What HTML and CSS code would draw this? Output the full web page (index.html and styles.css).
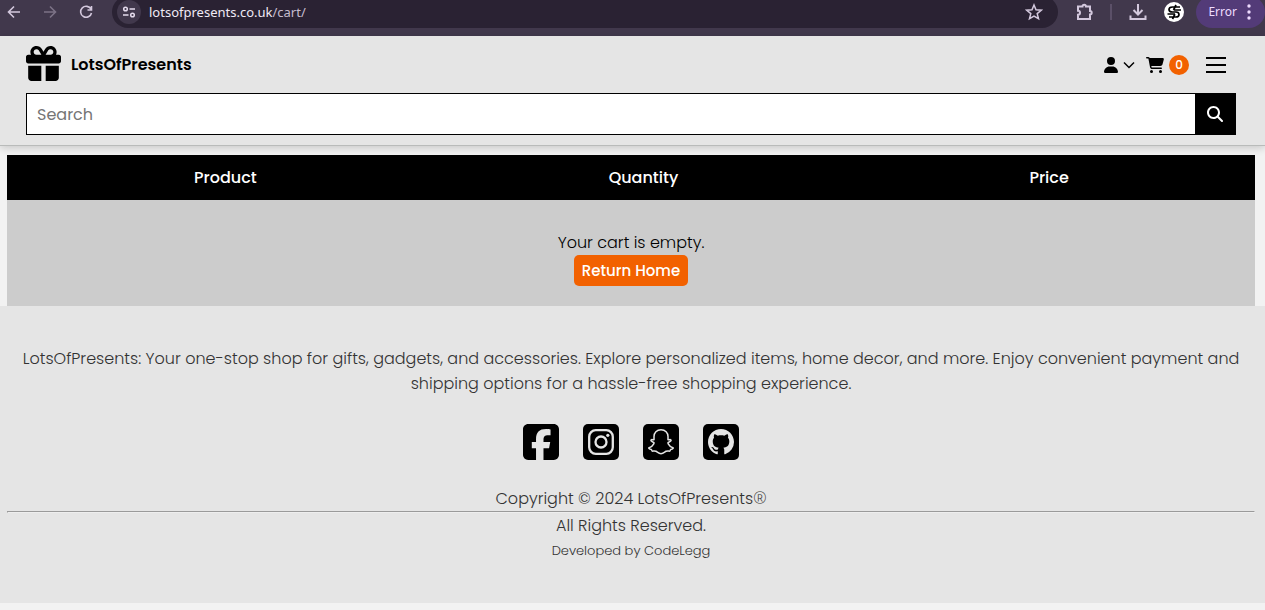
FILE: index.html
```html
<!DOCTYPE html>
<html lang="en">
<head>
<meta charset="utf-8">
<meta name="viewport" content="width=device-width, initial-scale=1">
<title>LotsOfPresents - Cart</title>
<link rel="stylesheet" href="styles.css">
</head>
<body>
<div class="browser">
  <div class="browser-row">
    <div class="browser-nav">
      <button class="tool" aria-label="Back"><svg width="16" height="16" viewBox="0 0 16 16"><path d="M14 8H3M8 2.500L2.500 8L8 13.500"/></svg></button>
      <button class="tool tool-off" aria-label="Forward"><svg width="16" height="16" viewBox="0 0 16 16"><path d="M2 8h11M8 2.500L13.500 8L8 13.500"/></svg></button>
      <button class="tool" aria-label="Reload"><svg width="16" height="16" viewBox="0 0 16 16"><path d="M13 5.200A5.500 5.500 0 1 0 13.500 9M13.500 2v4h-4"/></svg></button>
    </div>
    <div class="address">
      <button class="site-info" aria-label="Site information"><svg width="14" height="14" viewBox="0 0 14 14"><circle cx="3.500" cy="4" r="1.800"/><path d="M7.500 4h5.500M1 10h5.500"/><circle cx="10.500" cy="10" r="1.800"/></svg></button>
      <div class="url">lotsofpresents.co.uk<span class="url-path">/cart/</span></div>
      <button class="tool" aria-label="Bookmark"><svg width="18" height="18" viewBox="0 0 18 18"><path d="M9 2l2 4.800 5.200.4-4 3.400 1.300 5.100L9 13l-4.500 2.700 1.300-5.100-4-3.400L7 6.800z"/></svg></button>
    </div>
    <div class="browser-tools">
      <button class="tool" aria-label="Extensions"><svg width="18" height="18" viewBox="0 0 18 18"><path d="M2 3.500h4.500a1.700 1.700 0 0 1 3.400 0H14V8a1.700 1.700 0 0 1 0 3.400V16H2v-4.200a2 2 0 0 0 0-4z"/></svg></button>
      <span class="divider"></span>
      <button class="tool" aria-label="Downloads"><svg width="18" height="18" viewBox="0 0 18 18"><path d="M9 1v10M4.500 7L9 11.500L13.500 7M1.500 12.500V16h15v-3.500"/></svg></button>
      <button class="profile" aria-label="Profile"><svg width="20" height="20" viewBox="0 0 20 20"><circle cx="10" cy="10" r="10" fill="#fff"/><path d="M16 5H8.500Q5 5 5 7.500T8.500 10h3.500Q15 10 15 12.500T12 15H5M17 8H9.500M3.500 12H11M12 3L9.500 8M11 12l-2.500 5" fill="none" stroke="#000" stroke-width="1.700"/></svg></button>
      <button class="error">Error<svg width="4" height="16" viewBox="0 0 4 16"><circle cx="2" cy="2" r="1.700"/><circle cx="2" cy="8" r="1.700"/><circle cx="2" cy="14" r="1.700"/></svg></button>
    </div>
  </div>
</div>

<header class="site-header">
  <div class="brand-row">
    <a class="brand" href="#">
      <svg width="35" height="35" viewBox="0 0 512 512"><path d="M190.500 68.800L225.300 128H224 152c-22.100 0-40-17.900-40-40s17.900-40 40-40h2.200c14.900 0 28.800 7.900 36.300 20.800zM64 88c0 14.400 3.500 28 9.600 40H32c-17.700 0-32 14.300-32 32v64c0 17.700 14.300 32 32 32H480c17.700 0 32-14.300 32-32V160c0-17.700-14.300-32-32-32H438.400c6.100-12 9.600-25.600 9.600-40c0-48.600-39.400-88-88-88h-2.200c-31.900 0-61.500 16.900-77.700 44.400L256 85.500l-24.100-41C215.700 16.900 186.100 0 154.200 0H152C103.400 0 64 39.400 64 88zm336 0c0 22.100-17.900 40-40 40H288h-1.300l34.800-59.200C329.100 55.900 342.900 48 357.800 48H360c22.100 0 40 17.900 40 40zM32 288V464c0 26.500 21.500 48 48 48H224V288H32zM288 512H432c26.500 0 48-21.500 48-48V288H288V512z"/></svg>
      <span class="brand-name">LotsOfPresents</span>
    </a>
    <nav class="actions">
      <button class="account" aria-label="Account">
        <svg width="14" height="16" viewBox="0 0 448 512"><path d="M224 256A128 128 0 1 0 224 0a128 128 0 1 0 0 256zm-45.700 48C79.800 304 0 383.800 0 482.300C0 498.700 13.300 512 29.700 512H418.300c16.400 0 29.700-13.300 29.700-29.700C448 383.800 368.200 304 269.700 304H178.300z"/></svg>
        <svg class="line" width="12" height="8" viewBox="0 0 12 8"><path d="M1 1.500l5 5 5-5"/></svg>
      </button>
      <a class="cart" href="#" aria-label="Cart">
        <svg width="18" height="16" viewBox="0 0 576 512"><path d="M0 24C0 10.700 10.700 0 24 0H69.500c22 0 41.500 12.800 50.600 32h411c26.300 0 45.500 25 38.600 50.400l-41 152.300c-8.500 31.400-37 53.300-69.500 53.300H170.700l5.400 28.500c2.200 11.300 12.100 19.500 23.600 19.500H488c13.300 0 24 10.700 24 24s-10.700 24-24 24H199.700c-34.600 0-64.300-24.600-70.700-58.500L77.400 54.500c-.7-3.800-4-6.500-7.900-6.500H24C10.700 48 0 37.300 0 24zM128 464a48 48 0 1 1 96 0 48 48 0 1 1 -96 0zm336-48a48 48 0 1 1 0 96 48 48 0 1 1 0-96z"/></svg>
        <span class="count">0</span>
      </a>
      <button class="menu" aria-label="Menu"><span></span><span></span><span></span></button>
    </nav>
  </div>
  <form class="search" role="search">
    <input class="search-input" type="text" placeholder="Search" aria-label="Search">
    <button class="search-button" type="button" aria-label="Submit search"><svg width="16" height="16" viewBox="0 0 512 512"><path d="M416 208c0 45.900-14.900 88.300-40 122.700L502.600 457.400c12.500 12.500 12.500 32.800 0 45.300s-32.800 12.500-45.300 0L330.700 376c-34.400 25.200-76.800 40-122.700 40C93.100 416 0 322.900 0 208S93.100 0 208 0S416 93.100 416 208zM208 352a144 144 0 1 0 0-288 144 144 0 1 0 0 288z"/></svg></button>
  </form>
</header>

<main class="cart-main">
  <table class="cart-table">
    <thead><tr><th class="col-product">Product</th><th class="col-quantity">Quantity</th><th>Price</th></tr></thead>
    <tbody><tr><td colspan="3"><p class="empty-text">Your cart is empty.</p><a class="home-link" href="#">Return Home</a></td></tr></tbody>
  </table>
</main>

<footer class="site-footer">
  <p class="about">LotsOfPresents: Your one-stop shop for gifts, gadgets, and accessories. Explore personalized items, home decor, and more. Enjoy convenient payment and shipping options for a hassle-free shopping experience.</p>
  <div class="social">
    <a href="#" aria-label="Facebook"><svg width="36" height="36" viewBox="0 32 448 448"><path d="M64 32C28.700 32 0 60.700 0 96V416c0 35.300 28.700 64 64 64h98.200V334.200H109.400V256h52.800V222.300c0-87.100 39.400-127.500 125-127.500c16.200 0 44.200 3.200 55.700 6.400V172c-6-.6-16.500-1-29.600-1c-42 0-58.200 15.900-58.200 57.200V256h83.600l-14.400 78.200H255V480H384c35.300 0 64-28.700 64-64V96c0-35.300-28.700-64-64-64H64z"/></svg></a>
    <a href="#" aria-label="Instagram"><svg width="36" height="36" viewBox="0 0 36 36"><rect width="36" height="36" rx="5"/><g fill="none" stroke="#e5e5e5" stroke-width="2.300"><rect x="6.200" y="6.200" width="23.600" height="23.600" rx="6.500"/><circle cx="18" cy="18" r="5.500"/></g><circle cx="24.800" cy="11.300" r="1.600" fill="#e5e5e5"/></svg></a>
    <a href="#" aria-label="Snapchat"><svg width="36" height="36" viewBox="0 0 36 36"><rect width="36" height="36" rx="5"/><path d="M18 5.800c-4.300 0-7 3-7 6.700v3.200c-.8.400-2-.5-2.800.1-.8.800.1 1.600 2.500 2.700.6.300.3 1-.1 1.700-1 1.800-2.500 3.100-4.500 3.600-.7.300-.3 1.200 2.300 1.800.5.200.3 1.300.8 1.500.8.200 2.200-.4 3.700.2 1.500.7 2.700 2.400 5.100 2.400s3.600-1.700 5.100-2.400c1.500-.6 2.900 0 3.700-.2.500-.2.300-1.300.8-1.500 2.600-.6 3-1.500 2.300-1.800-2-.5-3.500-1.800-4.500-3.600-.4-.7-.7-1.400-.1-1.700 2.400-1.100 3.300-1.900 2.500-2.700-.8-.6-2 .3-2.800-.1v-3.200c0-3.700-2.700-6.700-7-6.700z" fill="none" stroke="#e5e5e5" stroke-width="1.500" stroke-linejoin="round"/></svg></a>
    <a href="#" aria-label="GitHub"><svg width="36" height="36" viewBox="0 0 36 36"><rect width="36" height="36" rx="5"/><path transform="translate(5 5) scale(1.625)" fill="#e5e5e5" d="M8 0C3.580 0 0 3.580 0 8c0 3.540 2.290 6.530 5.470 7.590.4.070.55-.17.55-.38 0-.19-.01-.82-.01-1.490-2.010.37-2.530-.49-2.690-.94-.09-.23-.48-.94-.82-1.130-.28-.15-.68-.52-.01-.53.63-.01 1.080.58 1.230.82.72 1.210 1.870.87 2.330.66.07-.52.28-.87.51-1.070-1.780-.2-3.640-.89-3.640-3.950 0-.87.31-1.590.82-2.150-.08-.2-.36-1.020.08-2.120 0 0 .67-.21 2.200.82.64-.18 1.320-.27 2-.27s1.360.09 2 .27c1.530-1.040 2.200-.82 2.200-.82.44 1.100.16 1.920.08 2.120.51.56.82 1.270.82 2.150 0 3.070-1.870 3.750-3.650 3.950.29.25.54.73.54 1.480 0 1.070-.01 1.930-.01 2.200 0 .21.15.46.55.38A8.010 8.010 0 0 0 16 8c0-4.420-3.580-8-8-8"/></svg></a>
  </div>
  <p class="copyright">Copyright © 2024 LotsOfPresents<span class="mark">®</span></p>
  <hr class="rule">
  <p class="rights">All Rights Reserved.</p>
  <p class="developer">Developed by CodeLegg</p>
</footer>
</body>
</html>
```
FILE: styles.css
```css
* { box-sizing: border-box; }
body {
  margin: 0;
  background: #f2f2f2;
  color: #000;
  font-family: Poppins, Inter, sans-serif;
  font-size: 16px;
  line-height: 24px;
}
p { margin: 0; }
a { color: inherit; text-decoration: none; }
button {
  padding: 0;
  border: 0;
  background: none;
  color: inherit;
  font: inherit;
}
svg { display: block; flex: none; }

.browser {
  overflow: hidden;
  padding-bottom: 8px;
  background: #41384c;
  color: #e5dced;
  font: 13px/20px "Noto Sans", sans-serif;
}
.browser-row {
  display: flex;
  align-items: center;
  height: 32px;
  margin-top: -4px;
}
.browser-nav {
  display: flex;
  gap: 20px;
  width: 112px;
  padding-left: 6px;
}
.tool svg {
  fill: none;
  stroke: #d3c8dd;
  stroke-width: 2;
}
.browser-nav svg { stroke-width: 1.6; }
.tool-off { opacity: 0.4; }
.address {
  display: flex;
  align-items: center;
  flex: 1;
  gap: 8px;
  height: 32px;
  padding: 0 15px 0 5px;
  border-radius: 16px;
  background: #2a2233;
}
.address .tool svg { stroke-width: 1.5; }
.site-info {
  display: flex;
  align-items: center;
  justify-content: center;
  width: 24px;
  height: 24px;
  border-radius: 12px;
  background: #41384c;
}
.site-info svg { fill: none; stroke: #e5dced; stroke-width: 1.5; }
.url { flex: 1; color: #f0eaf5; }
.url-path { color: #c6bccd; }
.browser-tools {
  display: flex;
  align-items: center;
  gap: 17px;
  padding-left: 18px;
}
.tool + .divider { margin-left: -1px; }
.divider { width: 2px; height: 16px; background: #5b5068; }
.error {
  display: flex;
  align-items: center;
  gap: 10px;
  height: 32px;
  margin-left: -5px;
  padding: 0 14px 0 12px;
  border-radius: 16px;
  background: #533b78;
  color: #eedcff;
  font-size: 12px;
}
.error svg { fill: #eedcff; }

.site-header {
  padding: 8px 29px 10px 26px;
  border-bottom: 1px solid #b9bbba;
  background: #e5e5e5;
  box-shadow: 0 2px 8px rgba(0, 0, 0, 0.18);
}
.brand-row {
  display: flex;
  align-items: center;
  justify-content: space-between;
  height: 38px;
}
.brand {
  display: flex;
  align-items: center;
  gap: 10px;
  font-weight: 600;
}
.brand-name { padding-top: 4px; }
.actions { display: flex; align-items: center; padding-right: 10px; padding-top: 4px; }
.account { display: flex; align-items: center; gap: 5px; }
.line { fill: none; stroke: #000; stroke-width: 1.5; }
.cart { display: flex; align-items: center; gap: 5px; margin-left: 11px; }
.count {
  width: 20px;
  height: 20px;
  border-radius: 10px;
  background: #f26100;
  color: #fff;
  font-size: 12px;
  font-weight: 500;
  line-height: 20px;
  text-align: center;
}
.menu { display: grid; gap: 5px; margin-left: 17px; }
.menu span { width: 20px; height: 2px; background: #000; }
.search { display: flex; margin-top: 11px; }
.search-input {
  flex: 1;
  min-width: 0;
  height: 42px;
  padding: 0 10px;
  border: 1px solid #000;
  border-radius: 0;
  background: #fff;
  color: #000;
  font: inherit;
}
.search-input::placeholder { color: #757575; opacity: 1; }
.search-button {
  display: flex;
  align-items: center;
  justify-content: center;
  width: 40px;
  padding-right: 2px;
  background: #000;
}
.search-button svg { fill: #fff; }

.cart-main { position: relative; padding: 9px 10px 0 7px; }
.cart-table {
  width: 100%;
  border-collapse: collapse;
  table-layout: fixed;
  background: #ccc;
  text-align: center;
}
.cart-table th {
  height: 45px;
  padding: 0;
  background: #000;
  color: #fff;
  font-weight: 500;
}
.col-product { width: 35%; }
.col-quantity { width: 32%; }
.cart-table td { padding: 31px 0 20px; }
.empty-text { font-weight: 300; }
.home-link {
  display: inline-block;
  padding: 4px 8px;
  border-radius: 5px;
  background: #f26100;
  color: #fff;
  font-size: 15px;
  font-weight: 500;
  line-height: 23px;
  vertical-align: top;
}

.site-footer {
  padding: 40px 10px 39px 7px;
  background: #e5e5e5;
  color: #333;
  font-weight: 300;
  text-align: center;
}
.about { padding: 0 8px; line-height: 25px; }
.social {
  display: flex;
  justify-content: center;
  gap: 24px;
  margin: 28px 0 26px;
}
.social svg { fill: #000; }
.copyright { line-height: 25px; }
.mark { font-family: "Open Sans", sans-serif; line-height: 1; }
.rule { margin: 0; border: 1px inset #eee; }
.rights { line-height: 25px; }
.developer { font-size: 13px; line-height: 26px; }
```
